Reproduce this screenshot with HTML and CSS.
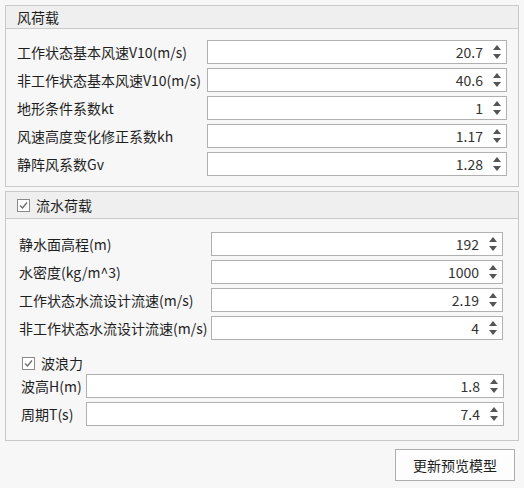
FILE: index.html
```html
<!DOCTYPE html>
<html>
<head>
<meta charset="utf-8">
<link rel="stylesheet" href="styles.css">
</head>
<body>
<div class="page">
  <section class="group g1">
    <div class="head"><span class="title">风荷载</span></div>
    <div class="body grid1">
      <label class="lbl">工作状态基本风速V10(m/s)</label>
      <div class="spin"><span class="val">20.7</span><span class="arrows"><i class="up"></i><i class="dn"></i></span></div>
      <label class="lbl">非工作状态基本风速V10(m/s)</label>
      <div class="spin"><span class="val">40.6</span><span class="arrows"><i class="up"></i><i class="dn"></i></span></div>
      <label class="lbl">地形条件系数kt</label>
      <div class="spin"><span class="val">1</span><span class="arrows"><i class="up"></i><i class="dn"></i></span></div>
      <label class="lbl">风速高度变化修正系数kh</label>
      <div class="spin"><span class="val">1.17</span><span class="arrows"><i class="up"></i><i class="dn"></i></span></div>
      <label class="lbl">静阵风系数Gv</label>
      <div class="spin"><span class="val">1.28</span><span class="arrows"><i class="up"></i><i class="dn"></i></span></div>
    </div>
  </section>

  <section class="group g2">
    <div class="head head2"><span class="cb"><svg width="11" height="11" viewBox="0 0 11 11"><path d="M2 5.5 L4.5 8 L9 2.5" fill="none" stroke="#6a6a6a" stroke-width="1.3"/></svg></span><span class="title">流水荷载</span></div>
    <div class="body body2">
      <div class="grid2">
        <label class="lbl">静水面高程(m)</label>
        <div class="spin"><span class="val">192</span><span class="arrows"><i class="up"></i><i class="dn"></i></span></div>
        <label class="lbl">水密度(kg/m^3)</label>
        <div class="spin"><span class="val">1000</span><span class="arrows"><i class="up"></i><i class="dn"></i></span></div>
        <label class="lbl">工作状态水流设计流速(m/s)</label>
        <div class="spin"><span class="val">2.19</span><span class="arrows"><i class="up"></i><i class="dn"></i></span></div>
        <label class="lbl">非工作状态水流设计流速(m/s)</label>
        <div class="spin"><span class="val">4</span><span class="arrows"><i class="up"></i><i class="dn"></i></span></div>
      </div>
      <div class="wave">
        <div class="wave-head"><span class="cb"><svg width="11" height="11" viewBox="0 0 11 11"><path d="M2 5.5 L4.5 8 L9 2.5" fill="none" stroke="#6a6a6a" stroke-width="1.3"/></svg></span><span class="title">波浪力</span></div>
        <div class="grid3">
          <label class="lbl">波高H(m)</label>
          <div class="spin"><span class="val">1.8</span><span class="arrows"><i class="up"></i><i class="dn"></i></span></div>
          <label class="lbl">周期T(s)</label>
          <div class="spin"><span class="val">7.4</span><span class="arrows"><i class="up"></i><i class="dn"></i></span></div>
        </div>
      </div>
    </div>
  </section>

  <div class="footer"><button class="btn">更新预览模型</button></div>
</div>
</body>
</html>
```
FILE: styles.css
```css
html, body {
  margin: 0;
  padding: 0;
  background: #f7f7f7;
}
body {
  font-family: "Noto Sans CJK SC", "Noto Sans", sans-serif;
  font-size: 14px;
  color: #1e1e1e;
  width: 524px;
  height: 488px;
  overflow: hidden;
}
.page {
  padding: 5px 5px 0 5px;
  display: flex;
  flex-direction: column;
}
.group {
  border: 1px solid #c9c9c9;
  background: #f7f7f7;
}
.g2 {
  margin-top: 4px;
}
.head {
  height: 22px;
  background: #efefef;
  border-bottom: 1px solid #c9c9c9;
  display: flex;
  align-items: center;
  padding-left: 11px;
}
.head2 {
  height: 26px;
}
.title {
  line-height: 20px;
}
.body {
  padding: 11px 10px 10px 11px;
}
.grid1 {
  display: grid;
  grid-template-columns: 190px 300px;
  row-gap: 4px;
  align-items: center;
}
.lbl {
  line-height: 24px;
  white-space: nowrap;
}
.spin {
  height: 22px;
  border: 1px solid #b0b0b0;
  background: #ffffff;
  display: flex;
  align-items: center;
  justify-content: flex-end;
  color: #333333;
}
.val {
  line-height: 22px;
}
.arrows {
  width: 8px;
  margin: 0 5px 0 10px;
  display: flex;
  flex-direction: column;
  align-items: center;
  gap: 4px;
}
.arrows i {
  display: block;
  width: 0;
  height: 0;
  border-left: 4px solid transparent;
  border-right: 4px solid transparent;
}
.arrows .up {
  border-bottom: 5px solid #555;
}
.arrows .dn {
  border-top: 5px solid #555;
}
.cb {
  width: 11px;
  height: 11px;
  border: 1px solid #8a8a8a;
  background: #fff;
  display: inline-flex;
  margin-right: 6px;
}
.cb svg {
  display: block;
}
.body2 {
  padding: 13px 14px 14px 13px;
}
.grid2 {
  display: grid;
  grid-template-columns: 192px 292px;
  row-gap: 4px;
  align-items: center;
}
.wave {
  padding: 13px 0 0 2px;
}
.wave-head {
  display: flex;
  align-items: center;
  height: 20px;
  padding-left: 1px;
}
.grid3 {
  margin-top: 1px;
  display: grid;
  grid-template-columns: 65px 418px;
  row-gap: 4px;
  align-items: center;
}
.footer {
  display: flex;
  justify-content: flex-end;
  padding-top: 8px;
  padding-right: 4px;
}
.btn {
  width: 120px;
  height: 32px;
  border: 1px solid #adadad;
  background: #fdfdfd;
  font-family: "Noto Sans CJK SC", "Noto Sans", sans-serif;
  font-size: 14px;
  color: #1e1e1e;
  padding: 0;
}
```
